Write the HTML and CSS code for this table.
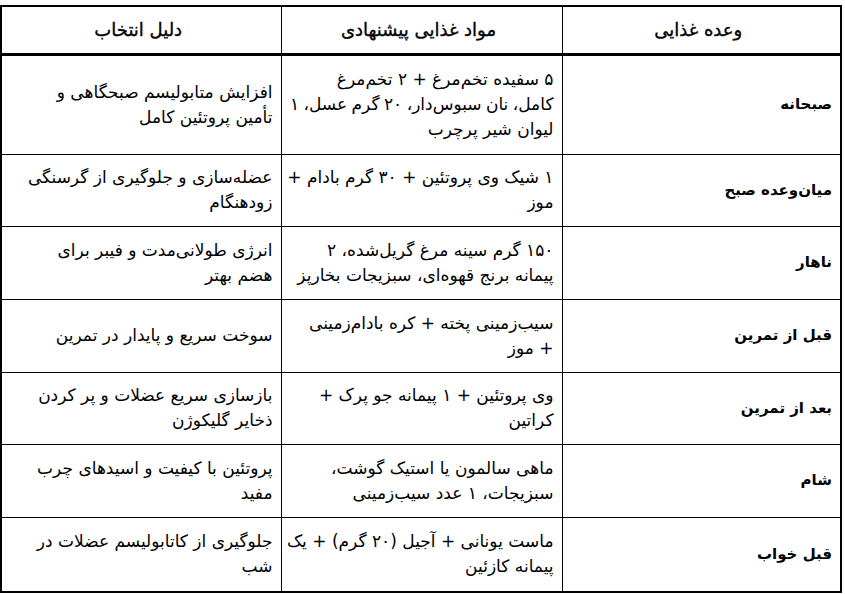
FILE: index.html
```html
<!DOCTYPE html>
<html lang="fa" dir="rtl">
<head>
<meta charset="utf-8">
<link rel="stylesheet" href="styles.css">
</head>
<body>
<table class="plan">
  <colgroup>
    <col class="c-meal">
    <col class="c-food">
    <col class="c-why">
  </colgroup>
  <thead>
    <tr class="r-head">
      <th>وعده غذایی</th>
      <th>مواد غذایی پیشنهادی</th>
      <th>دلیل انتخاب</th>
    </tr>
  </thead>
  <tbody>
    <tr class="r-1">
      <td class="meal">صبحانه</td>
      <td>۵ سفیده تخم‌مرغ + ۲ تخم‌مرغ<br><span class="tight">کامل، نان سبوس‌دار، ۲۰ گرم عسل، ۱</span><br>لیوان شیر پرچرب</td>
      <td>افزایش متابولیسم صبحگاهی و<br>تأمین پروتئین کامل</td>
    </tr>
    <tr class="r-2">
      <td class="meal">میان‌وعده صبح</td>
      <td>۱ شیک وی پروتئین + ۳۰ گرم بادام +<br>موز</td>
      <td>عضله‌سازی و جلوگیری از گرسنگی<br>زودهنگام</td>
    </tr>
    <tr class="r-3">
      <td class="meal">ناهار</td>
      <td>۱۵۰ گرم سینه مرغ گریل‌شده، ۲<br>پیمانه برنج قهوه‌ای، سبزیجات بخارپز</td>
      <td>انرژی طولانی‌مدت و فیبر برای<br>هضم بهتر</td>
    </tr>
    <tr class="r-4">
      <td class="meal">قبل از تمرین</td>
      <td>سیب‌زمینی پخته + کره بادام‌زمینی<br>+ موز</td>
      <td>سوخت سریع و پایدار در تمرین</td>
    </tr>
    <tr class="r-5">
      <td class="meal">بعد از تمرین</td>
      <td>وی پروتئین + ۱ پیمانه جو پرک +<br>کراتین</td>
      <td>بازسازی سریع عضلات و پر کردن<br>ذخایر گلیکوژن</td>
    </tr>
    <tr class="r-6">
      <td class="meal">شام</td>
      <td>ماهی سالمون یا استیک گوشت،<br>سبزیجات، ۱ عدد سیب‌زمینی</td>
      <td>پروتئین با کیفیت و اسیدهای چرب<br>مفید</td>
    </tr>
    <tr class="r-7">
      <td class="meal">قبل خواب</td>
      <td>ماست یونانی + آجیل (۲۰ گرم) + یک<br>پیمانه کازئین</td>
      <td>جلوگیری از کاتابولیسم عضلات در<br>شب</td>
    </tr>
  </tbody>
</table>
</body>
</html>
```

FILE: styles.css
```css
html, body {
  margin: 0;
  padding: 0;
  background: #ffffff;
}
body {
  padding: 5px 3px 0 2px;
  font-family: "DejaVu Sans", "Noto Sans", sans-serif;
  color: #000;
}
.plan {
  width: 840px;
  border-collapse: collapse;
  table-layout: fixed;
  direction: rtl;
  border: 2px solid #000;
}
.c-meal { width: 279px; }
.c-food { width: 281px; }
.c-why { width: 280px; }
.plan th, .plan td {
  border: 1px solid #000;
  padding: 0 8px 0 2px;
  vertical-align: middle;
  text-align: right;
  font-size: 17px;
  line-height: 25px;
  font-weight: normal;
  white-space: nowrap;
}
.plan th {
  text-align: center;
  font-size: 18px;
  border-bottom: 3px solid #000;
  -webkit-text-stroke: 0.35px #000;
}
.plan td.meal {
  font-size: 15px;
  font-weight: bold;
}
.tight {
  word-spacing: -1px;
}
.r-head { height: 48px; }
.r-1 { height: 100px; }
.r-2 { height: 72px; }
.r-3 { height: 73px; }
.r-4 { height: 73px; }
.r-5 { height: 72px; }
.r-6 { height: 73px; }
.r-7 { height: 75px; }
```
